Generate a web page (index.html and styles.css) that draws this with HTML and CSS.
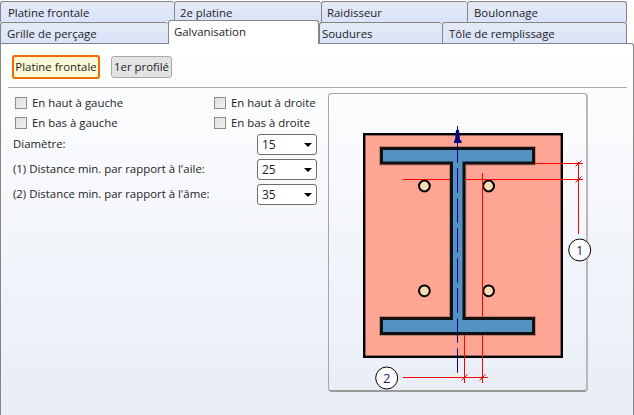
FILE: index.html
```html
<!DOCTYPE html>
<html lang="fr">
<head>
<meta charset="utf-8">
<title>Galvanisation</title>
<link rel="stylesheet" href="styles.css">
</head>
<body>
<div class="window">
  <div class="tab-row tab-row-back">
    <div class="tab w-a">Platine frontale</div>
    <div class="tab w-b">2e platine</div>
    <div class="tab w-c">Raidisseur</div>
    <div class="tab w-d">Boulonnage</div>
  </div>
  <div class="tab-row tab-row-front">
    <div class="tab w-e">Grille de perçage</div>
    <div class="tab tab-active">Galvanisation</div>
    <div class="tab w-f">Soudures</div>
    <div class="tab w-g">Tôle de remplissage</div>
  </div>
  <div class="panel">
    <div class="toolbar">
      <button class="btn btn-on">Platine frontale</button>
      <button class="btn btn-off">1er profilé</button>
    </div>
    <div class="separator"></div>
    <div class="main">
      <div class="options">
        <div class="checks">
          <label class="check"><input type="checkbox" class="box"><span>En haut à gauche</span></label>
          <label class="check"><input type="checkbox" class="box"><span>En haut à droite</span></label>
          <label class="check"><input type="checkbox" class="box"><span>En bas à gauche</span></label>
          <label class="check"><input type="checkbox" class="box"><span>En bas à droite</span></label>
        </div>
        <div class="field"><span class="field-label">Diamètre:</span><div class="combo"><span>15</span><i class="caret"></i></div></div>
        <div class="field"><span class="field-label">(1) Distance min. par rapport à l'aile:</span><div class="combo"><span>25</span><i class="caret"></i></div></div>
        <div class="field"><span class="field-label">(2) Distance min. par rapport à l'âme:</span><div class="combo"><span>35</span><i class="caret"></i></div></div>
      </div>
      <div class="figure">
        <svg class="drawing" width="259" height="298" viewBox="328 93 259 298" xmlns="http://www.w3.org/2000/svg">
          <rect x="364.2" y="134.2" width="197.6" height="222.6" fill="#ffa594" stroke="#000" stroke-width="2.4"/>
          <path d="M381.5 148.5H533.5V163H464V318.5H533.5V333.5H381.5V318.5H451.5V163H381.5Z" fill="#5592c4" stroke="#000" stroke-width="5" stroke-opacity=".22"/>
          <path d="M381.5 148.5H533.5V163H464V318.5H533.5V333.5H381.5V318.5H451.5V163H381.5Z" fill="#5592c4" stroke="#111" stroke-width="3"/>
          <g fill="#f5deb3" stroke="#000" stroke-width="2">
            <circle cx="424.4" cy="186" r="5.4"/>
            <circle cx="488.6" cy="186" r="5.4"/>
            <circle cx="424.4" cy="290.8" r="5.4"/>
            <circle cx="488.6" cy="290.8" r="5.4"/>
          </g>
          <line x1="457.5" y1="372.7" x2="457.5" y2="126" stroke="#00008b" stroke-width="1" stroke-dasharray="24.4 5.6"/>
          <path d="M456 130H459L460 140L461.5 140.5V143H454V140.5L455 140Z" fill="#00008b"/>
          <g stroke="#f00" stroke-width="1" fill="none">
            <path d="M535 163.5H583M403 179.5H450M465 179.5H583M578.5 162V234"/>
            <path d="M482.5 173V316.5M482.5 335V383M464.5 335V383M403 377.5H488"/>
            <path d="M575.5 166.5L581.5 160.5M575.5 182.5L581.5 176.5M461.5 380.5L467.5 374.5M479.5 380.5L485.5 374.5"/>
          </g>
          <circle cx="579.7" cy="250" r="11" fill="#fff" stroke="#000" stroke-width="1"/>
          <text x="579.7" y="255" class="num">1</text>
          <circle cx="386.7" cy="378" r="11" fill="#fff" stroke="#000" stroke-width="1"/>
          <text x="386.7" y="383" class="num">2</text>
        </svg>
      </div>
    </div>
  </div>
</div>
</body>
</html>
```
FILE: styles.css
```css
* { box-sizing: border-box; }
html, body { margin: 0; height: 100%; }
body { background: #fff; overflow: hidden; }
.window {
  width: 634px;
  height: 415px;
  padding-top: 1px;
  display: flex;
  flex-direction: column;
  font: 11.4px/16px "Open Sans", sans-serif;
  color: #1c1c28;
}
.tab-row { display: flex; align-items: flex-end; height: 21px; width: 627px; }
.tab {
  height: 21px;
  padding: 3px 0 0 7px;
  border: 1px solid #858585;
  border-bottom: 0;
  border-right-width: 0;
  border-radius: 3px 3px 0 0;
  background: linear-gradient(#e4e9f4, #d9e4fa);
  white-space: nowrap;
}
.tab-row-front .tab { padding-left: 6px; }
.w-a { width: 174px; }
.tab.w-b { width: 147px; padding-left: 5px; }
.tab.w-c { width: 146px; padding-left: 5px; }
.tab.w-d { width: 160px; padding-left: 6px; border-right-width: 1px; }
.w-e { width: 168px; }
.tab-row-front .w-f { width: 123px; padding-left: 2px; }
.w-g { width: 185px; border-right-width: 1px; }
.tab-row-front .tab-active {
  position: relative;
  z-index: 2;
  width: 151px;
  height: 24px;
  margin-bottom: -1px;
  padding: 3px 0 0 5px;
  border-right-width: 1px;
  background: #fff;
}
.panel {
  flex: 1;
  min-height: 0;
  border: 1px solid #858585;
  border-bottom: 0;
  border-top-right-radius: 3px;
  background: linear-gradient(#fff, #e8edf6);
}
.toolbar { display: flex; align-items: center; gap: 11px; height: 24px; margin: 11px 0 0 11px; }
.btn {
  padding: 0;
  font: inherit;
  color: inherit;
  white-space: nowrap;
  border-radius: 3px;
}
.btn-on { width: 88px; height: 24px; border: 2px solid #f36b00; background: #fdfbd6; }
.btn-off { width: 61px; height: 22px; border: 1px solid #a8a8a8; background: #e3e3e3; }
.separator { height: 1px; margin: 8px 6px 0 7px; background: #a9a9a9; }
.main { display: flex; margin: 5px 0 0 12px; }
.options { width: 304px; margin-right: 11px; }
.checks { display: grid; grid-template-columns: 199px 1fr; grid-auto-rows: 20px; margin-left: 2px; margin-bottom: 1px; }
.check { display: flex; align-items: center; gap: 5px; white-space: nowrap; }
.box {
  appearance: none;
  width: 12px;
  height: 12px;
  margin: 0;
  border: 1px solid #8c8c8c;
  background: linear-gradient(135deg, #e0e0e0, #f0f0f0);
}
.field { display: flex; align-items: center; justify-content: space-between; height: 21px; margin-bottom: 4px; }
.field-label { margin-top: -2px; white-space: nowrap; }
.combo {
  display: flex;
  align-items: center;
  justify-content: space-between;
  width: 60px;
  height: 21px;
  padding: 0 4px;
  border: 1px solid #6e6e6e;
  border-radius: 3px;
  background: #fff;
  font-size: 12px;
}
.caret {
  width: 0;
  height: 0;
  border-left: 4px solid transparent;
  border-right: 4px solid transparent;
  border-top: 4px solid #000;
}
.figure {
  width: 260px;
  height: 299px;
  border: 1px solid #a5a5a5;
  border-right: 2px solid #b8b8b8;
  border-bottom: 2px solid #9a9a9a;
  border-radius: 4px;
}
.drawing { display: block; overflow: visible; margin: -1px 0 0 -1px; }
.num { font: 13px "Open Sans", sans-serif; text-anchor: middle; fill: #2a1a6a; }
```
